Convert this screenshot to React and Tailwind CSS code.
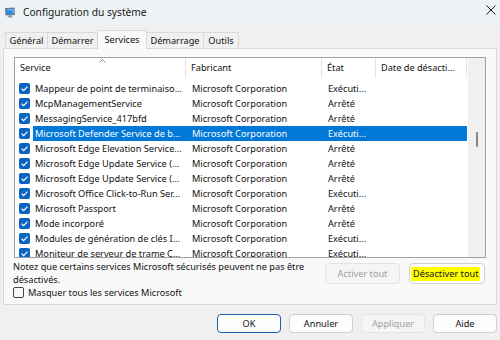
import React from "react";

const rows = [
  ["Mappeur de point de terminaiso...", "Exécuti..."],
  ["McpManagementService", "Arrêté"],
  ["MessagingService_417bfd", "Arrêté"],
  ["Microsoft Defender Service de b...", "Exécuti...", true],
  ["Microsoft Edge Elevation Service...", "Arrêté"],
  ["Microsoft Edge Update Service (...", "Arrêté"],
  ["Microsoft Edge Update Service (...", "Arrêté"],
  ["Microsoft Office Click-to-Run Ser...", "Exécuti..."],
  ["Microsoft Passport", "Arrêté"],
  ["Mode incorporé", "Arrêté"],
  ["Modules de génération de clés I...", "Exécuti..."],
  ["Moniteur de serveur de trame C...", "Exécuti..."],
];

function Checked() {
  return (
    <svg width="11" height="11" viewBox="0 0 11 11" className="block">
      <rect x="0" y="0" width="11" height="11" rx="2" fill="#0a64c2" />
      <path d="M2.6 5.6 L4.6 7.6 L8.5 3.6" fill="none" stroke="#fff" strokeWidth="1.2" />
    </svg>
  );
}

function Tab({ label, w, sel }) {
  if (sel) {
    return (
      <div className={`${w} h-[19px] -mb-px -ml-px relative z-10 flex items-start justify-center pt-[2px] bg-[#f9f9f9] border border-b-0 border-[#d9d9d9]`}>
        {label}
      </div>
    );
  }
  return (
    <div className={`${w} h-[16px] -ml-px flex items-center justify-center bg-[#f0f0f0] border border-b-0 border-[#d9d9d9]`}>
      {label}
    </div>
  );
}

export default function App() {
  return (
    <div className="w-[500px] h-[340px] bg-[#f0f0f0] flex flex-col overflow-hidden font-['Noto_Sans',sans-serif] text-[9.2px] text-[#111]">
      {/* Title bar */}
      <div className="h-[25px] bg-[#edf2f5] flex items-center relative shrink-0">
        <svg width="12" height="11" viewBox="0 0 12 11" className="ml-[4px] block">
          <path d="M1 1 L10.5 0.5 L11 8 L1.5 8.5 Z" fill="#6d7f92" />
          <path d="M2 2 L9.8 1.6 L10.1 7.1 L2.4 7.4 Z" fill="#2f86dc" />
          <path d="M3 3 L9 2.7 L9.2 6.2" fill="none" stroke="#9fd0ff" strokeWidth="0.8" />
          <path d="M4 8.5 L8 8.3 L8.6 10.4 L3.6 10.6 Z" fill="#8e9aa6" />
        </svg>
        <span className="ml-[7px] text-[10.2px] text-[#1a1a1a]">Configuration du système</span>
        <svg width="10" height="10" viewBox="0 0 10 10" className="absolute right-[4px] top-[5px]">
          <path d="M0.5 0.5 L9.5 9.5 M9.5 0.5 L0.5 9.5" stroke="#1a1a1a" strokeWidth="1" />
        </svg>
      </div>

      {/* Tabs */}
      <div className="flex items-end h-[18px] mt-[5px] pl-[6px] shrink-0">
        <Tab label="Général" w="w-[43px]" />
        <Tab label="Démarrer" w="w-[51px]" />
        <Tab label="Services" w="w-[50px]" sel />
        <Tab label="Démarrage" w="w-[58px]" />
        <Tab label="Outils" w="w-[36px]" />
      </div>

      {/* Panel */}
      <div className="mx-[3px] w-[494px] h-[257px] border border-[#d9d9d9] bg-[#f9f9f9] flex flex-col shrink-0">
        <div className="pl-[10px] pt-[8px]">
          <div className="w-[472px] h-[201px] border border-[#a0a0a0] bg-white flex overflow-hidden">
            <div className="w-[453px] flex flex-col">
              {/* Header */}
              <div className="h-[20px] flex shrink-0">
                <div className="w-[171px] h-full border-r border-[#e5e5e5] pl-[5px] flex items-center relative">
                  Service
                  <svg width="7" height="4" viewBox="0 0 7 4" className="absolute left-[84px] top-[1px]">
                    <path d="M0.5 3.5 L3.5 0.5 L6.5 3.5" fill="none" stroke="#7a7a7a" strokeWidth="0.9" />
                  </svg>
                </div>
                <div className="w-[136px] h-full border-r border-[#e5e5e5] pl-[5px] flex items-center">Fabricant</div>
                <div className="w-[54px] h-full border-r border-[#e5e5e5] pl-[5px] flex items-center">État</div>
                <div className="w-[91px] h-full border-r border-[#e5e5e5] pl-[5px] flex items-center">Date de désacti...</div>
              </div>
              {/* Rows */}
              <div className="pt-[3px] flex flex-col">
                {rows.map(([name, state, sel], i) => (
                  <div key={i} className="flex h-[15px] items-center shrink-0">
                    <div className="w-[18px] h-full flex items-center pl-[4px]">
                      <Checked />
                    </div>
                    <div className={`flex h-full items-center whitespace-nowrap ${sel ? "bg-[#0078d7] text-white" : ""}`}>
                      <div className="w-[153px] pl-[2px] overflow-hidden">{name}</div>
                      <div className="w-[136px] pl-[6px] overflow-hidden">Microsoft Corporation</div>
                      <div className="w-[54px] pl-[6px] overflow-hidden">{state}</div>
                      <div className="w-[91px]"></div>
                    </div>
                  </div>
                ))}
              </div>
            </div>
            {/* Scrollbar */}
            <div className="w-[17px] bg-[#f0f0f0] flex justify-center pt-[74px]">
              <div className="w-[2px] h-[15px] rounded-full bg-[#858585]"></div>
            </div>
          </div>
        </div>

        {/* Footer in panel */}
        <div className="flex mt-[2px] pl-[9px]">
          <div className="w-[312px] flex flex-col">
            <div className="leading-[13px]">Notez que certains services Microsoft sécurisés peuvent ne pas être</div>
            <div className="leading-[13px]">désactivés.</div>
            <div className="flex items-center h-[13px] mt-[0px]">
              <div className="w-[11px] h-[11px] rounded-[2px] border border-[#444] bg-[#f9f9f9]"></div>
              <span className="ml-[4px]">Masquer tous les services Microsoft</span>
            </div>
          </div>
          <div className="flex gap-[9px] mt-[3px]">
            <div className="w-[75px] h-[21px] rounded-[4px] border border-[#e3e3e3] bg-[#f5f5f5] text-[#a0a0a0] flex items-center justify-center">
              Activer tout
            </div>
            <div className="w-[76px] h-[21px] rounded-[4px] border border-[#cfcfcf] bg-[#fdfdfd] flex items-center pl-[1px]">
              <span className="bg-[#ffff00] px-[2px] leading-[14px]">Désactiver tout</span>
            </div>
          </div>
        </div>
      </div>

      {/* Bottom buttons */}
      <div className="flex justify-end gap-[8px] pr-[3px] mt-[9px]">
        <div className="w-[64px] h-[19px] rounded-[4px] border border-[#1d5fae] bg-[#fdfdfd] flex items-center justify-center">OK</div>
        <div className="w-[64px] h-[19px] rounded-[4px] border border-[#cfcfcf] bg-[#fdfdfd] flex items-center justify-center">Annuler</div>
        <div className="w-[64px] h-[19px] rounded-[4px] border border-[#e3e3e3] bg-[#f5f5f5] text-[#a0a0a0] flex items-center justify-center">Appliquer</div>
        <div className="w-[64px] h-[19px] rounded-[4px] border border-[#cfcfcf] bg-[#fdfdfd] flex items-center justify-center">Aide</div>
      </div>
    </div>
  );
}
